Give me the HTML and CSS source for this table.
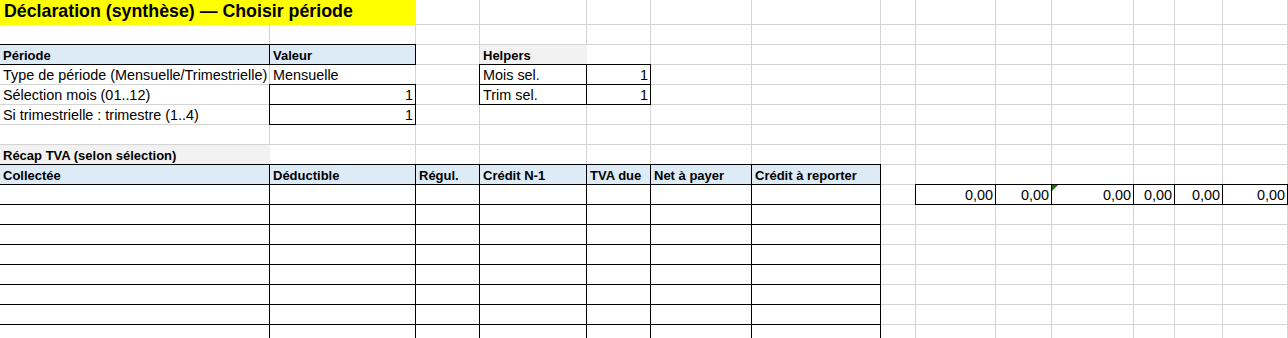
FILE: index.html
```html
<!DOCTYPE html>
<html lang="fr">
<head>
    <meta charset="UTF-8">
    <meta name="viewport" content="width=device-width, initial-scale=1.0">
    <title>Déclaration (synthèse)</title>
    <link rel="stylesheet" href="styles.css">
</head>
<body>
    <div class="sheet">
        <div class="row row-title">
            <div class="cell title">Déclaration (synthèse) — Choisir période</div>
        </div>
        <div class="row"></div>

        <!-- choix de la période -->
        <div class="row">
            <div class="cell box head">Période</div>
            <div class="cell box head">Valeur</div>
            <div class="cell fill-gray bold c4">Helpers</div>
        </div>
        <div class="row">
            <div class="cell">Type de période (Mensuelle/Trimestrielle)</div>
            <div class="cell">Mensuelle</div>
            <div class="cell box c4">Mois sel.</div>
            <div class="cell box num">1</div>
        </div>
        <div class="row">
            <div class="cell">Sélection mois (01..12)</div>
            <div class="cell box num">1</div>
            <div class="cell box c4">Trim sel.</div>
            <div class="cell box num">1</div>
        </div>
        <div class="row">
            <div class="cell">Si trimestrielle : trimestre (1..4)</div>
            <div class="cell box num">1</div>
        </div>
        <div class="row"></div>

        <!-- récap TVA -->
        <div class="row">
            <div class="cell fill-gray bold">Récap TVA (selon sélection)</div>
        </div>
        <div class="row">
            <div class="cell box head">Collectée</div>
            <div class="cell box head">Déductible</div>
            <div class="cell box head">Régul.</div>
            <div class="cell box head">Crédit N-1</div>
            <div class="cell box head">TVA due</div>
            <div class="cell box head">Net à payer</div>
            <div class="cell box head">Crédit à reporter</div>
        </div>
        <div class="row">
            <div class="cell box"></div><div class="cell box"></div><div class="cell box"></div><div class="cell box"></div><div class="cell box"></div><div class="cell box"></div><div class="cell box"></div>
            <div class="cell box num c9">0,00</div>
            <div class="cell box num">0,00</div>
            <div class="cell box num flag">0,00</div>
            <div class="cell box num">0,00</div>
            <div class="cell box num">0,00</div>
            <div class="cell box num">0,00</div>
        </div>
        <div class="row">
            <div class="cell box"></div><div class="cell box"></div><div class="cell box"></div><div class="cell box"></div><div class="cell box"></div><div class="cell box"></div><div class="cell box"></div>
        </div>
        <div class="row">
            <div class="cell box"></div><div class="cell box"></div><div class="cell box"></div><div class="cell box"></div><div class="cell box"></div><div class="cell box"></div><div class="cell box"></div>
        </div>
        <div class="row">
            <div class="cell box"></div><div class="cell box"></div><div class="cell box"></div><div class="cell box"></div><div class="cell box"></div><div class="cell box"></div><div class="cell box"></div>
        </div>
        <div class="row">
            <div class="cell box"></div><div class="cell box"></div><div class="cell box"></div><div class="cell box"></div><div class="cell box"></div><div class="cell box"></div><div class="cell box"></div>
        </div>
        <div class="row">
            <div class="cell box"></div><div class="cell box"></div><div class="cell box"></div><div class="cell box"></div><div class="cell box"></div><div class="cell box"></div><div class="cell box"></div>
        </div>
        <div class="row">
            <div class="cell box"></div><div class="cell box"></div><div class="cell box"></div><div class="cell box"></div><div class="cell box"></div><div class="cell box"></div><div class="cell box"></div>
        </div>
        <div class="row">
            <div class="cell box"></div><div class="cell box"></div><div class="cell box"></div><div class="cell box"></div><div class="cell box"></div><div class="cell box"></div><div class="cell box"></div>
        </div>
    </div>
</body>
</html>
```

FILE: styles.css
```css
body {
    margin: 0;
    font-family: "Liberation Sans", Arial, sans-serif;
    font-size: 14.4px;
    color: #000;
    background: #fff;
    overflow: hidden;
}
/* quadrillage vertical : une ligne grise au bord droit de chaque colonne */
.sheet {
    --grid: #d4d4d4;
    background-image:
        linear-gradient(var(--grid), var(--grid)), linear-gradient(var(--grid), var(--grid)),
        linear-gradient(var(--grid), var(--grid)), linear-gradient(var(--grid), var(--grid)),
        linear-gradient(var(--grid), var(--grid)), linear-gradient(var(--grid), var(--grid)),
        linear-gradient(var(--grid), var(--grid)), linear-gradient(var(--grid), var(--grid)),
        linear-gradient(var(--grid), var(--grid)), linear-gradient(var(--grid), var(--grid)),
        linear-gradient(var(--grid), var(--grid)), linear-gradient(var(--grid), var(--grid)),
        linear-gradient(var(--grid), var(--grid)), linear-gradient(var(--grid), var(--grid));
    background-size: 1px 100%;
    background-repeat: no-repeat;
    background-position:
        269px 0, 415px 0, 479px 0, 586px 0, 650px 0, 751px 0, 880px 0,
        915px 0, 995px 0, 1051px 0, 1133px 0, 1174px 0, 1222px 0, 1287px 0;
}
/* chaque ligne : mêmes colonnes, trait gris en bas */
.row {
    display: grid;
    grid-template-columns: 270px 146px 64px 107px 64px 101px 129px 35px 80px 56px 82px 41px 48px 65px 1fr;
    grid-template-rows: minmax(0, 1fr);
    height: 20px;
    background: linear-gradient(to top, var(--grid) 1px, transparent 1px);
}
.row-title {
    height: 25px;
}
.cell {
    padding: 0 2px 0 3px;
    line-height: 20px;
    white-space: nowrap;
    min-width: 0;
}
/* cellule encadrée : le trait haut/gauche recouvre le quadrillage voisin */
.box {
    margin: -1px 0 0 -1px;
    border: 1px solid #000;
}
.num {
    text-align: right;
}
.bold,
.head {
    padding-top: 1px;
    font-size: 13px;
    font-weight: bold;
}
.head {
    background: #ddebf7;
}
.fill-gray {
    background: #f2f2f2;
}
.title {
    grid-column: span 2;
    background: #ffff00;
    font-size: 17.8px;
    font-weight: bold;
    line-height: 23px;
    padding: 0 4px;
}
.c4 {
    grid-column-start: 4;
}
.c9 {
    grid-column-start: 9;
}
/* petit triangle vert d'avertissement dans le coin */
.flag {
    position: relative;
}
.flag::before {
    content: "";
    position: absolute;
    left: 0;
    top: 0;
    border-style: solid;
    border-width: 6px 6px 0 0;
    border-color: #0e7a0d transparent transparent transparent;
}
```
